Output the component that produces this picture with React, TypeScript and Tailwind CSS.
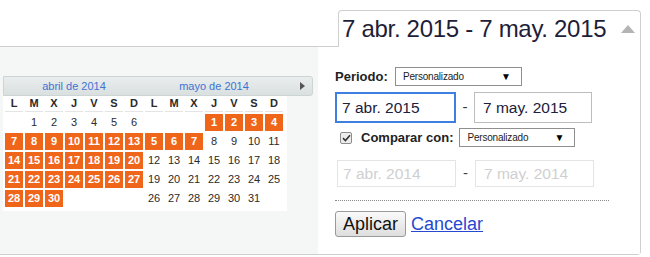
import React from 'react';

type Cell = { d: number | null; on: boolean };

// semanas de abril y mayo 2014 (lunes primero)
const april: (number | null)[][] = [
  [null, 1, 2, 3, 4, 5, 6],
  [7, 8, 9, 10, 11, 12, 13],
  [14, 15, 16, 17, 18, 19, 20],
  [21, 22, 23, 24, 25, 26, 27],
  [28, 29, 30, null, null, null, null],
];
const may: (number | null)[][] = [
  [null, null, null, 1, 2, 3, 4],
  [5, 6, 7, 8, 9, 10, 11],
  [12, 13, 14, 15, 16, 17, 18],
  [19, 20, 21, 22, 23, 24, 25],
  [26, 27, 28, 29, 30, 31, null],
];

const dow = ['L', 'M', 'X', 'J', 'V', 'S', 'D'];

function buildRows(): Cell[][] {
  return april.map((row, i) => [
    ...row.map((d) => ({ d, on: d !== null && d >= 7 })),
    ...may[i].map((d) => ({ d, on: d !== null && d <= 7 })),
  ]);
}

function Select({ width }: { width: string }) {
  return (
    <div
      className={`${width} h-[19px] border border-[#8f8f8f] bg-white flex items-center justify-between pl-[7px] pr-[10px]`}
    >
      <span className="text-[10px] text-[#222] leading-none tracking-[-0.2px]">Personalizado</span>
      <span className="text-[10px] text-black leading-none">▼</span>
    </div>
  );
}

export default function App() {
  const rows = buildRows();

  return (
    <div className="w-[650px] h-[257px] bg-white overflow-hidden font-['Liberation_Sans',Arial,sans-serif]">
      {/* Selector de rango */}
      <div className="flex h-[47px] w-[641px]">
        <div className="flex-1 border-b border-[#cfcfcf]" />
        <div className="w-[303px] mt-[10px] border border-b-0 border-[#cfcfcf] rounded-t-[4px] bg-white flex items-center justify-between pl-[3px] pr-[5px]">
          <span className="text-[24px] leading-none text-[#1e1e38] tracking-[-0.3px]">
            7 abr. 2015 - 7 may. 2015
          </span>
          <svg width="14" height="8" viewBox="0 0 14 8">
            <polygon points="7,0 14,8 0,8" fill="#b4b4b4" />
          </svg>
        </div>
      </div>

      {/* Panel */}
      <div className="w-[641px] h-[208px] border-r border-b border-[#cfcfcf] rounded-br-[4px] flex">
        {/* Calendario */}
        <div className="w-[318px] bg-[#f5f7f7] pt-[29px] pl-[3px]">
          <div className="w-[310px] h-[20px] bg-gradient-to-b from-[#e9eded] to-[#dadfdf] border border-[#cdd4d4] rounded-r-[3px] flex items-center pl-[1px]">
            <span className="w-[138px] text-center text-[11px] text-[#3d73d6] leading-none">abril de 2014</span>
            <span className="w-[2px]" />
            <span className="w-[138px] text-center text-[11px] text-[#3d73d6] leading-none">mayo de 2014</span>
            <span className="flex-1 flex justify-end pr-[7px]">
              <svg width="5" height="8" viewBox="0 0 5 8">
                <polygon points="0,0 5,4 0,8" fill="#555" />
              </svg>
            </span>
          </div>

          <div className="w-[284px] bg-white pl-[2px] pr-[4px] pb-[4px]">
            <div className="grid grid-cols-[repeat(14,18px)] gap-x-[2px] gap-y-[2px]">
              {[...dow, ...dow].map((l, i) => (
                <div
                  key={'h' + i}
                  className="h-[16px] flex items-center justify-center text-[11px] font-bold text-[#2a2a2a] border-b border-[#e4e4e4]"
                >
                  {l}
                </div>
              ))}
              {rows.flat().map((c, i) => (
                <div
                  key={i}
                  className={`h-[17px] flex items-center justify-center text-[11px] leading-none ${
                    c.on ? 'bg-[#ef661a] text-white font-bold' : 'text-[#2b2b2b]'
                  }`}
                >
                  {c.d ?? ''}
                </div>
              ))}
            </div>
          </div>
        </div>

        {/* Formulario */}
        <div className="flex-1 bg-white pl-[17px] pt-[20px]">
          <div className="flex items-center h-[19px]">
            <span className="w-[60px] text-[13px] font-bold text-[#222]">Periodo:</span>
            <Select width="w-[127px]" />
          </div>

          <div className="flex items-center mt-[6px]">
            <div className="w-[121px] h-[31px] border-2 border-[#3f7fe0] flex items-center pl-[5px] text-[15.5px] text-[#20203c]">
              7 abr. 2015
            </div>
            <span className="w-[18px] text-center text-[15px] text-[#333]">-</span>
            <div className="w-[118px] h-[31px] border border-[#bdbdbd] flex items-center pl-[8px] text-[15.5px] text-[#20203c]">
              7 may. 2015
            </div>
          </div>

          <div className="flex items-center h-[19px] mt-[5px]">
            <span className="ml-[5px] w-[12px] h-[12px] rounded-[2px] border border-[#8d8d8d] bg-[#ececec] flex items-center justify-center">
              <svg width="9" height="8" viewBox="0 0 9 8">
                <path d="M1 4.2 L3.4 6.5 L8 1.2" stroke="#333" strokeWidth="1.6" fill="none" />
              </svg>
            </span>
            <span className="ml-[9px] text-[13px] font-bold text-[#222]">Comparar con:</span>
            <span className="ml-[6px]">
              <Select width="w-[116px]" />
            </span>
          </div>

          <div className="flex items-center mt-[13px] ml-[2px]">
            <div className="w-[119px] h-[27px] border border-[#e4e4e4] flex items-center pl-[5px] text-[15.5px] text-[#cfcfcf]">
              7 abr. 2014
            </div>
            <span className="w-[19px] text-center text-[15px] text-[#444]">-</span>
            <div className="w-[119px] h-[27px] border border-[#e4e4e4] flex items-center pl-[8px] text-[15.5px] text-[#cfcfcf]">
              7 may. 2014
            </div>
          </div>

          <div className="w-[274px] mt-[13px] border-t border-dotted border-[#8a8a8a]" />

          <div className="flex items-center mt-[10px]">
            <button className="w-[71px] h-[26px] border border-[#9a9a9a] rounded-[3px] bg-gradient-to-b from-[#fafafa] to-[#dedede] text-[18px] leading-none text-[#111]">
              Aplicar
            </button>
            <a className="ml-[5px] text-[18px] leading-none text-[#2748d0] underline cursor-pointer">Cancelar</a>
          </div>
        </div>
      </div>
    </div>
  );
}
